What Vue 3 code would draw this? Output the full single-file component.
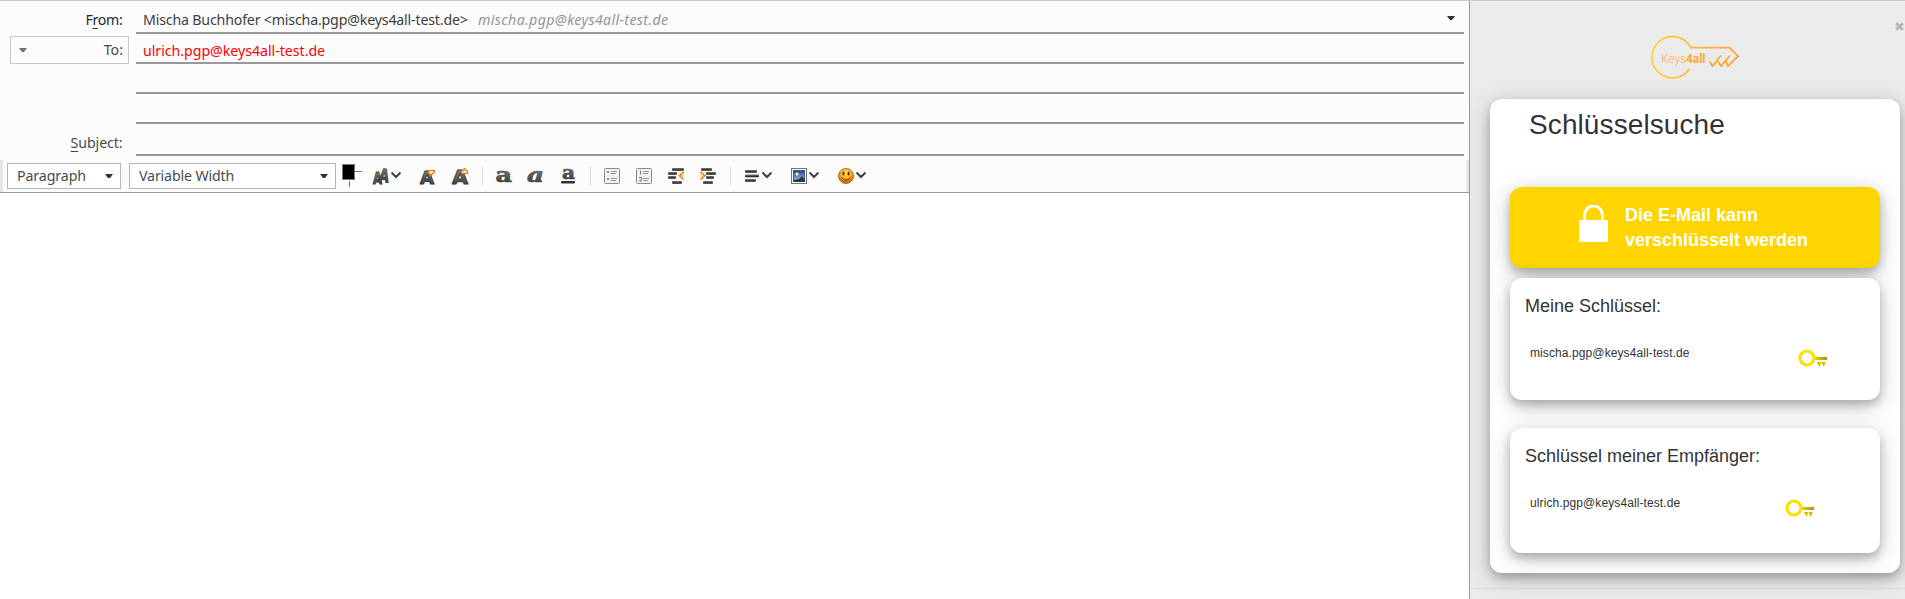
<script setup>
const cards = [
  { id: 'own', title: 'Meine Schlüssel:', mail: 'mischa.pgp@keys4all-test.de' },
  { id: 'recipients', title: 'Schlüssel meiner Empfänger:', mail: 'ulrich.pgp@keys4all-test.de' }
]
</script>

<template>
  <div class="window">
    <main class="composer">
      <div class="headers">
        <div class="row from-row">
          <label class="label from-label">F<u>r</u>om:</label>
          <div class="field">
            <span class="identity">Mischa Buchhofer &lt;mischa.pgp@keys4all-test.de&gt;</span>
            <span class="hint">mischa.pgp@keys4all-test.de</span>
            <svg class="arrow from-arrow" width="8" height="4" viewBox="0 0 8 4"><path d="M0 0H8L5 4H3Z" /></svg>
          </div>
        </div>
        <div class="row">
          <div class="to-box">
            <svg class="arrow soft" width="8" height="4" viewBox="0 0 8 4"><path d="M0 0H8L5 4H3Z" /></svg>
            <span>To:</span>
          </div>
          <div class="field"><span class="recipient">ulrich.pgp@keys4all-test.de</span></div>
        </div>
        <div class="row"><span></span><div class="field"></div></div>
        <div class="row"><span></span><div class="field"></div></div>
        <div class="row subject-row">
          <label class="label subject-label"><u>S</u>ubject:</label>
          <div class="field"></div>
        </div>
      </div>

      <div class="toolbar">
        <div class="select paragraph">
          <span>Paragraph</span>
          <svg class="arrow" width="8" height="4" viewBox="0 0 8 4"><path d="M0 0H8L5 4H3Z" /></svg>
        </div>
        <div class="select font">
          <span>Variable Width</span>
          <svg class="arrow" width="8" height="4" viewBox="0 0 8 4"><path d="M0 0H8L5 4H3Z" /></svg>
        </div>
        <svg class="tools" width="540" height="32" viewBox="336 160 540 32">
          <defs>
            <linearGradient id="ink" x1="0" y1="0" x2="0" y2="1">
              <stop offset="0" stop-color="#9a9c9a" /><stop offset="1" stop-color="#252827" />
            </linearGradient>
            <linearGradient id="bar" x1="0" y1="0" x2="0" y2="1">
              <stop offset="0" stop-color="#777975" /><stop offset="1" stop-color="#111" />
            </linearGradient>
            <linearGradient id="sky" x1="0" y1="0" x2="0" y2="1">
              <stop offset="0" stop-color="#23477f" /><stop offset="1" stop-color="#a9c4e8" />
            </linearGradient>
            <radialGradient id="smile" cx=".5" cy=".3" r=".7">
              <stop offset="0" stop-color="#ffe36b" /><stop offset=".55" stop-color="#f6a821" /><stop offset="1" stop-color="#b95b06" />
            </radialGradient>
          </defs>

          <rect x="349" y="171" width="13" height="16" fill="#fff" />
          <path d="M355 171.500H362M349.500 181V187" stroke="#777" />
          <rect x="342.500" y="164.500" width="12" height="15" stroke="#777" />

          <g class="cap">
            <text x="373" y="184" font-size="16" textLength="9" lengthAdjust="spacingAndGlyphs">A</text>
            <text x="379" y="182" font-size="18" textLength="10" lengthAdjust="spacingAndGlyphs" transform="rotate(8 384 176)">A</text>
            <text x="420" y="184" font-size="17" textLength="14" lengthAdjust="spacingAndGlyphs">A</text>
            <text x="452" y="184" font-size="19.500" textLength="16" lengthAdjust="spacingAndGlyphs">A</text>
          </g>
          <path d="M428.500 170.500H434.500V172L431 175.500L428.500 173Z" fill="#ffe6a8" stroke="#e07414" stroke-width="1.200" />
          <path d="M461.500 173.500V171.500L464.500 168.500L467.500 171.500V173.500Z" fill="#ffe6a8" stroke="#e07414" stroke-width="1.200" />

          <g class="slab">
            <text x="495.500" y="182" font-size="20" textLength="16.500" lengthAdjust="spacingAndGlyphs">a</text>
            <text x="527" y="182" font-size="20" textLength="17" lengthAdjust="spacingAndGlyphs" font-style="italic">a</text>
            <text x="562" y="179" font-size="19" textLength="13" lengthAdjust="spacingAndGlyphs">a</text>
          </g>
          <rect x="561" y="181" width="14" height="2.600" rx="1" fill="#333" />

          <path d="M482.500 167V185M590.500 167V185M730.500 167V185" stroke="#e0e0e0" />

          <g fill="#f1f1f0" stroke="#8b8d89">
            <rect x="604.500" y="168.500" width="15" height="15" rx="1" />
            <rect x="636.500" y="168.500" width="15" height="15" rx="1" />
          </g>
          <path d="M611 171.500H617M611 173.500H616M611 178.500H617M611 180.500H616M643 171.500H649M643 173.500H648M643 178.500H649M643 180.500H648" stroke="#999b97" />
          <path d="M607 171H609V173H607ZM607 178H609V180H607Z" fill="#8b8d89" />
          <path d="M640.500 170.500V174.500M639 177.500H641.500V179L639.500 181H642" fill="none" stroke="#777" />

          <g fill="url(#bar)">
            <rect x="672" y="168" width="12" height="2.800" rx="1" />
            <rect x="668" y="172" width="9" height="2.800" rx="1" />
            <rect x="668" y="176" width="8" height="2.800" rx="1" />
            <rect x="672" y="181" width="10" height="2.800" rx="1" />
            <rect x="701" y="168" width="11" height="2.800" rx="1" />
            <rect x="706" y="172" width="10" height="2.800" rx="1" />
            <rect x="706" y="176" width="8" height="2.800" rx="1" />
            <rect x="703" y="181" width="10" height="2.800" rx="1" />
            <rect x="745" y="170" width="12" height="2.800" rx="1" />
            <rect x="745" y="174.500" width="14" height="2.800" rx="1" />
            <rect x="745" y="179" width="11" height="2.800" rx="1" />
          </g>
          <path d="M683.500 172L679.500 175.500L683.500 179.500M700.500 172L705 175.500L700.500 179.500" fill="#ffd5a0" stroke="#e57817" stroke-width="1.800" stroke-dasharray="2 .6" />

          <rect x="791.500" y="168.500" width="15" height="15" fill="#fff" stroke="#73757b" />
          <rect x="793.500" y="170.500" width="11" height="11" fill="url(#sky)" stroke="#3b5a8b" />
          <circle cx="797" cy="174" r="1.500" fill="#fff" />
          <path d="M794 182V180L799 179L802 176L805 180V182Z" fill="#30343b" />

          <circle cx="846" cy="176" r="7.500" fill="url(#smile)" stroke="#b86c18" />
          <ellipse cx="843.500" cy="173.500" rx="1" ry="2" fill="#4a2a00" />
          <ellipse cx="848.500" cy="173.500" rx="1" ry="2" fill="#4a2a00" />
          <path d="M841.500 177.500Q846 183 850.500 177.500" fill="none" stroke="#5d3300" />

          <path class="chevron" d="M391.500 172.500L396 177L400.500 172.500M762.500 172.500L767 177L771.500 172.500M809.500 172.500L814 177L818.500 172.500M856.500 172.500L861 177L865.500 172.500" />
        </svg>
      </div>
      <div class="editor"></div>
    </main>

    <aside class="sidebar">
      <div class="brand">
        <svg class="logo" width="90" height="46" viewBox="0 0 90 46">
          <defs>
            <linearGradient id="gold" gradientUnits="userSpaceOnUse" x1="0" y1="0" x2="90" y2="0">
              <stop offset="0" stop-color="#ffd03c" /><stop offset="1" stop-color="#ff9f2e" />
            </linearGradient>
          </defs>
          <path d="M39.700 33.800A20.700 20.700 0 1 1 41 12.700H79.500L88 21.200L78 31L75.500 26" fill="none" stroke="url(#gold)" stroke-width="1.700" />
          <path d="M59.500 26.500L62.500 31L71 20.500M68 26.500L71 31L80 20.500" fill="none" stroke="#ffa531" stroke-width="1.700" />
          <text x="11" y="28" class="logo-text" textLength="44.500" lengthAdjust="spacingAndGlyphs"><tspan class="thin">Keys</tspan><tspan class="heavy">4all</tspan></text>
        </svg>
        <svg class="close" width="9" height="9" viewBox="0 0 9 9"><path d="M1.200 1.200L7.800 7.800M7.800 1.200L1.200 7.800" /></svg>
      </div>

      <section class="panel">
        <h1>Schlüsselsuche</h1>
        <div class="status">
          <svg width="29" height="37" viewBox="0 0 29 37">
            <path d="M5.500 17V10A9 9 0 0 1 23.500 10V17" fill="none" stroke="#fff" stroke-width="3" />
            <rect y="15" width="29" height="22" fill="#fff" />
          </svg>
          <p>Die E-Mail kann<br />verschlüsselt werden</p>
        </div>
        <div v-for="card in cards" :key="card.id" class="card" :class="card.id">
          <h2>{{ card.title }}</h2>
          <div class="entry">
            <span>{{ card.mail }}</span>
            <svg width="30" height="18" viewBox="0 0 30 18">
              <defs>
                <linearGradient id="brass" x1="0" y1="0" x2="1" y2="0">
                  <stop offset="0" stop-color="#e8d400" /><stop offset="1" stop-color="#a89300" />
                </linearGradient>
              </defs>
              <circle cx="9" cy="9" r="7" fill="none" stroke="#fae100" stroke-width="3.200" />
              <rect x="17" y="8" width="12" height="3" fill="url(#brass)" />
              <path d="M19 13H23.500L21.300 18ZM23.500 13H28L25.700 18Z" fill="#d8c000" />
            </svg>
          </div>
        </div>
      </section>
      <div class="foot"></div>
    </aside>
  </div>
</template>

<style>
body {
  background: #fff;
  overflow: hidden;
}
</style>

<style scoped>
.window {
  box-sizing: border-box;
  display: flex;
  height: 599px;
  border-top: 1px solid #ccc;
  overflow: hidden;
}
.composer {
  box-sizing: border-box;
  width: 1470px;
  flex: none;
  display: flex;
  flex-direction: column;
  border-right: 1px solid #999;
  font: 14.2px "Noto Sans", sans-serif;
  color: #464c4e;
}
.headers {
  height: 159px;
  background: #fcfcfc;
}
.row {
  display: grid;
  grid-template-columns: 136px 1328px;
  height: 30px;
}
.from-row { height: 33px; }
.subject-row { height: 32px; }
.label {
  text-align: right;
  padding-right: 13.500px;
  line-height: 20px;
}
.label u {
  text-decoration-thickness: 1px;
  text-underline-offset: 3px;
}
.from-label {
  padding-top: 9px;
  color: #25292b;
  letter-spacing: -0.3px;
}
.subject-label {
  padding-top: 9px;
  letter-spacing: -0.1px;
}
.field {
  display: flex;
  align-items: center;
  box-sizing: border-box;
  border-bottom: 2px solid #999;
  padding: 6px 9px 0 7px;
  white-space: nowrap;
}
.identity {
  width: 335px;
  color: #3b4143;
  letter-spacing: -0.18px;
}
.hint {
  font-style: italic;
  color: #929595;
  letter-spacing: 0.36px;
}
.recipient {
  color: #f00;
  margin-top: -2px;
  letter-spacing: -0.04px;
}
.arrow { fill: #2c3436; flex: none; }
.soft { fill: #687173; }
.from-arrow { margin: -4px 0 0 auto; }
.to-box {
  box-sizing: border-box;
  width: 119px;
  height: 28px;
  margin: 2px 0 0 10px;
  padding: 0 5px 1px 8px;
  border: 1px solid #c8c8c8;
  display: flex;
  align-items: center;
  justify-content: space-between;
}
.toolbar {
  box-sizing: border-box;
  height: 33px;
  display: flex;
  background: linear-gradient(#999, #999) bottom / 100% 1px no-repeat border-box, #fcfcfc;
  box-shadow: inset 3px -1px #e6e6e6, inset -3px 0 #e6e6e6;
  box-shadow: none;
  padding-left: 7px;
}
.toolbar::before {
  content: "";
  width: 3px;
  height: 32px;
  margin: 0 4px 0 -7px;
  background: #e6e6e6;
}
.toolbar::after {
  content: "";
  width: 3px;
  height: 32px;
  margin-left: auto;
  background: #e6e6e6;
}
.select {
  box-sizing: border-box;
  height: 26px;
  margin-top: 3px;
  border: 1px solid #b5b5b5;
  background: #fff;
  display: flex;
  align-items: center;
  justify-content: space-between;
  padding: 0 7px 1px 9px;
}
.paragraph { width: 114px; letter-spacing: -0.1px; }
.font { width: 207px; margin-left: 8px; letter-spacing: -0.15px; }
.cap text {
  font-family: "DejaVu Sans", sans-serif;
  font-weight: bold;
  fill: url(#ink);
  stroke: #3b3e3d;
  stroke-width: 1;
}
.slab text {
  font-family: "DejaVu Serif", serif;
  font-weight: bold;
  fill: url(#ink);
  stroke: #4a4d4b;
  stroke-width: 0.7;
}
.chevron {
  fill: none;
  stroke: #3d4446;
  stroke-width: 2;
}
.editor { flex: 1; background: #fff; }

.sidebar {
  width: 435px;
  flex: none;
  overflow: hidden;
  background: #ebebeb;
  font-family: "Liberation Sans", Arial, sans-serif;
  color: #333;
}
.brand {
  display: flex;
  align-items: flex-start;
  height: 98px;
}
.logo { margin: 34px 0 0 180px; }
.logo-text { font: 12px Roboto, sans-serif; fill: #ffb14e; }
.thin { font-weight: 300; }
.heavy { font-weight: 700; fill: #ffa62e; }
.close {
  margin: 21px 1px 0 auto;
  stroke: #b3b3b3;
  stroke-width: 2.800;
}
.panel, .status, .card {
  box-sizing: border-box;
  border-radius: 12px;
  background: #fff;
  box-shadow: 0 5px 10px rgba(0, 0, 0, 0.24), 0 5px 26px rgba(0, 0, 0, 0.19);
}
.panel {
  width: 410px;
  height: 474px;
  margin-left: 20px;
  padding: 0 20px;
  overflow: hidden;
}
h1 {
  margin: 0;
  padding: 9px 0 0 19px;
  height: 79px;
  font-size: 28px;
  line-height: 34px;
  font-weight: 400;
  letter-spacing: 0.1px;
}
.status {
  height: 81px;
  padding: 18px 0 0 69px;
  background: #ffd500;
  display: flex;
  align-items: flex-start;
  gap: 17px;
  color: #fff;
}
.status p {
  margin: -2px 0 0;
  font-size: 18px;
  line-height: 25px;
  font-weight: 700;
}
.card { padding: 17px 15px 0; }
.own { height: 122px; margin-top: 10px; }
.recipients { height: 125px; margin-top: 28px; }
h2 {
  margin: 0;
  font-size: 18px;
  line-height: 22px;
  font-weight: 400;
}
.entry {
  display: flex;
  align-items: flex-start;
  justify-content: space-between;
  padding: 28px 37px 0 5px;
  font-size: 12px;
  line-height: 16px;
  letter-spacing: 0.1px;
}
.recipients .entry { padding-right: 50px; }
.entry svg { margin-top: 4px; }
.foot {
  height: 26px;
  margin-top: 15px;
  border-top: 1px solid rgba(0, 0, 0, 0.06);
}
</style>
